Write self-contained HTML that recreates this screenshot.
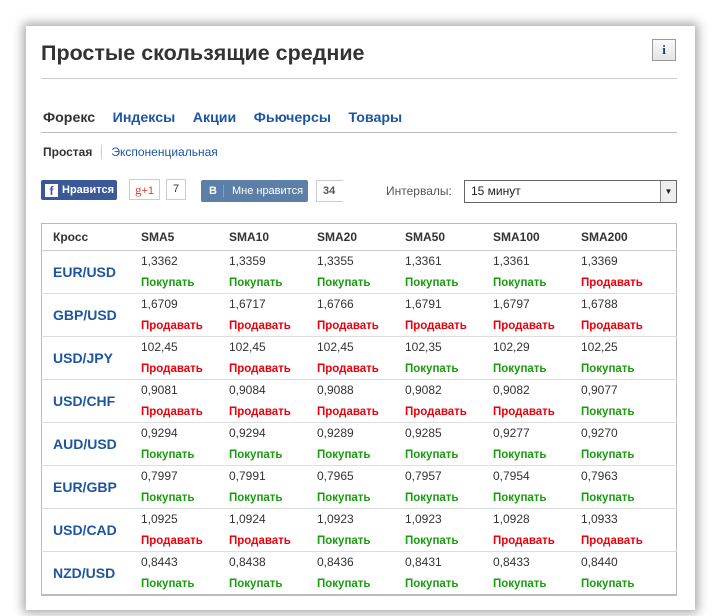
<!DOCTYPE html>
<html><head><meta charset="utf-8"><style>
body{margin:0;width:720px;height:616px;background:#fff;font-family:"Liberation Sans",Arial,sans-serif;position:relative;overflow:hidden}
.card{position:absolute;left:26px;top:26px;width:669px;height:584px;background:#fff;box-shadow:0 0 10px 3px rgba(0,0,0,.35)}
.abs{position:absolute}
h1{position:absolute;left:15px;top:15px;margin:0;font-size:21.5px;font-weight:bold;color:#333}
.info{position:absolute;left:626px;top:13px;width:22px;height:20px;border:1px solid #999;background:linear-gradient(#fafafa,#e4e4e4);font:bold 13px "Liberation Serif",serif;color:#1b3d6e;text-align:center;line-height:20px}
.hr{position:absolute;left:15px;width:636px;height:1px;background:#ccc}
.tabs{position:absolute;top:84px;left:17px;font-size:14.2px;font-weight:bold;color:#1d56a0}
.tabs span{margin-right:17.5px}
.sub{position:absolute;top:119px;left:17px;font-size:12px;color:#1d56a0}
table{position:absolute;left:15px;top:197px;width:636px;border-collapse:collapse;border:1px solid #bbb;border-bottom:2px solid #bbb;font-size:12px}
th{text-align:left;height:26px;font-size:12px;color:#333;padding:0;border-bottom:1px solid #ccc}
td{padding:0;height:42px;border-bottom:1px solid #ddd;vertical-align:top;color:#333}
td.p{vertical-align:middle;font-weight:bold;font-size:14px;color:#1d56a0;padding-left:11px}
td .v{display:block;margin-top:3px;height:23px}
.b{color:#1a9c0e}.s{color:#e8000b}
.b,.s{display:block;font-size:11.5px;font-weight:bold}
</style></head><body>
<div class="card">
<h1>Простые скользящие средние</h1>
<div class="info">i</div>
<div class="hr" style="top:52px"></div>
<div class="tabs"><span style="color:#333">Форекс</span><span>Индексы</span><span>Акции</span><span>Фьючерсы</span><span>Товары</span></div>
<div class="hr" style="top:106px;background:#bbb"></div>
<div class="sub"><b style="color:#333">Простая</b><span style="display:inline-block;width:1px;height:14px;background:#ccc;margin:0 9px;vertical-align:-3px"></span>Экспоненциальная</div>
<div class="abs" style="left:15px;top:154px;width:76px;height:20px;background:#3b5998;border-radius:2px;color:#fff;font-size:11px;font-weight:bold;line-height:20px"><span style="display:inline-block;width:13px;height:13px;background:#fff;color:#3b5998;margin:0 4px 0 4px;vertical-align:-2px;text-align:center;line-height:15px;font-size:12px">f</span>Нравится</div>
<div class="abs" style="left:103px;top:153px;width:29px;height:19px;border:1px solid #ccc;color:#d73d32;font-size:13px;line-height:19px;text-align:center;font-family:'Liberation Serif',serif">g<span style="font-family:'Liberation Sans';font-size:11px">+1</span></div>
<div class="abs" style="left:140px;top:153px;width:18px;height:19px;border:1px solid #ccc;font-size:11px;line-height:19px;text-align:center;color:#333">7</div>
<div class="abs" style="left:175px;top:154px;width:107px;height:22px;background:#5b7fa6;border-radius:2px;color:#fff;font-size:11px;line-height:22px"><b style="margin:0 6px 0 8px">В</b><span style="border-left:1px solid #86a0bd;padding-left:8px">Мне нравится</span></div>
<div class="abs" style="left:290px;top:154px;width:20px;height:20px;border:1px solid #ccc;border-right:none;font-size:11px;line-height:20px;font-weight:bold;color:#555;padding-left:6px">34</div>
<div class="abs" style="left:360px;top:158px;font-size:12px;color:#555">Интервалы:</div>
<div class="abs" style="left:438px;top:154px;width:211px;height:21px;border:1px solid #666;font-size:12px;line-height:21px;color:#222"><span style="padding-left:6px">15 минут</span><div class="abs" style="right:0;top:0;width:15px;height:21px;border-left:1px solid #888;background:#eee;font-size:8px;text-align:center;line-height:21px">▼</div></div>
<table>
<tr><th style="padding-left:11px;width:88px">Кросс</th><th style="width:88px">SMA5</th><th style="width:88px">SMA10</th><th style="width:88px">SMA20</th><th style="width:88px">SMA50</th><th style="width:88px">SMA100</th><th>SMA200</th></tr>
<tr><td class="p">EUR/USD</td><td><span class="v">1,3362</span><span class="b">Покупать</span></td><td><span class="v">1,3359</span><span class="b">Покупать</span></td><td><span class="v">1,3355</span><span class="b">Покупать</span></td><td><span class="v">1,3361</span><span class="b">Покупать</span></td><td><span class="v">1,3361</span><span class="b">Покупать</span></td><td><span class="v">1,3369</span><span class="s">Продавать</span></td></tr>
<tr><td class="p">GBP/USD</td><td><span class="v">1,6709</span><span class="s">Продавать</span></td><td><span class="v">1,6717</span><span class="s">Продавать</span></td><td><span class="v">1,6766</span><span class="s">Продавать</span></td><td><span class="v">1,6791</span><span class="s">Продавать</span></td><td><span class="v">1,6797</span><span class="s">Продавать</span></td><td><span class="v">1,6788</span><span class="s">Продавать</span></td></tr>
<tr><td class="p">USD/JPY</td><td><span class="v">102,45</span><span class="s">Продавать</span></td><td><span class="v">102,45</span><span class="s">Продавать</span></td><td><span class="v">102,45</span><span class="s">Продавать</span></td><td><span class="v">102,35</span><span class="b">Покупать</span></td><td><span class="v">102,29</span><span class="b">Покупать</span></td><td><span class="v">102,25</span><span class="b">Покупать</span></td></tr>
<tr><td class="p">USD/CHF</td><td><span class="v">0,9081</span><span class="s">Продавать</span></td><td><span class="v">0,9084</span><span class="s">Продавать</span></td><td><span class="v">0,9088</span><span class="s">Продавать</span></td><td><span class="v">0,9082</span><span class="s">Продавать</span></td><td><span class="v">0,9082</span><span class="s">Продавать</span></td><td><span class="v">0,9077</span><span class="b">Покупать</span></td></tr>
<tr><td class="p">AUD/USD</td><td><span class="v">0,9294</span><span class="b">Покупать</span></td><td><span class="v">0,9294</span><span class="b">Покупать</span></td><td><span class="v">0,9289</span><span class="b">Покупать</span></td><td><span class="v">0,9285</span><span class="b">Покупать</span></td><td><span class="v">0,9277</span><span class="b">Покупать</span></td><td><span class="v">0,9270</span><span class="b">Покупать</span></td></tr>
<tr><td class="p">EUR/GBP</td><td><span class="v">0,7997</span><span class="b">Покупать</span></td><td><span class="v">0,7991</span><span class="b">Покупать</span></td><td><span class="v">0,7965</span><span class="b">Покупать</span></td><td><span class="v">0,7957</span><span class="b">Покупать</span></td><td><span class="v">0,7954</span><span class="b">Покупать</span></td><td><span class="v">0,7963</span><span class="b">Покупать</span></td></tr>
<tr><td class="p">USD/CAD</td><td><span class="v">1,0925</span><span class="s">Продавать</span></td><td><span class="v">1,0924</span><span class="s">Продавать</span></td><td><span class="v">1,0923</span><span class="b">Покупать</span></td><td><span class="v">1,0923</span><span class="b">Покупать</span></td><td><span class="v">1,0928</span><span class="s">Продавать</span></td><td><span class="v">1,0933</span><span class="s">Продавать</span></td></tr>
<tr><td class="p">NZD/USD</td><td><span class="v">0,8443</span><span class="b">Покупать</span></td><td><span class="v">0,8438</span><span class="b">Покупать</span></td><td><span class="v">0,8436</span><span class="b">Покупать</span></td><td><span class="v">0,8431</span><span class="b">Покупать</span></td><td><span class="v">0,8433</span><span class="b">Покупать</span></td><td><span class="v">0,8440</span><span class="b">Покупать</span></td></tr>
</table>
</div>
</body></html>
